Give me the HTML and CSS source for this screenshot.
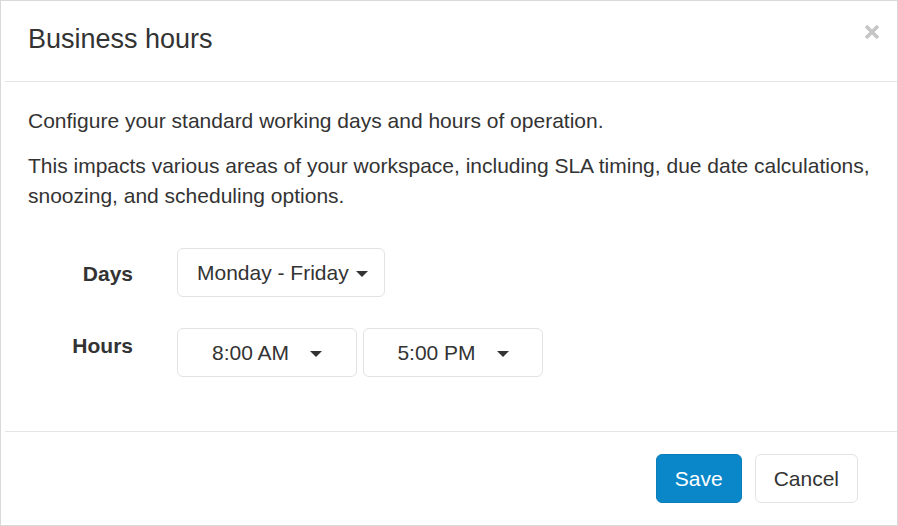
FILE: index.html
```html
<!DOCTYPE html>
<html lang="en">
<head>
    <meta charset="UTF-8">
    <meta name="viewport" content="width=device-width, initial-scale=1.0">
    <title>Business hours</title>
    <link rel="stylesheet" href="styles.css">
</head>
<body>
    <div class="modal">
        <div class="modal-inner">
            <div class="modal-header">
                <h4 class="modal-title">Business hours</h4>
                <button type="button" class="close" aria-label="Close">
                    <svg width="16" height="16" viewBox="0 0 16 16">
                        <path d="M2 2 L14 14 M14 2 L2 14" stroke="#c6c6c6" stroke-width="3.6" stroke-linecap="butt" fill="none"/>
                    </svg>
                </button>
            </div>
            <div class="modal-body">
                <p>Configure your standard working days and hours of operation.</p>
                <p>This impacts various areas of your workspace, including SLA timing, due date calculations, snoozing, and scheduling options.</p>
                <form class="hours-form">
                    <div class="form-row">
                        <label class="control-label days-label">Days</label>
                        <div class="controls">
                            <button type="button" class="dropdown days-dropdown">Monday - Friday<span class="caret"></span></button>
                        </div>
                    </div>
                    <div class="form-row">
                        <label class="control-label hours-label">Hours</label>
                        <div class="controls">
                            <button type="button" class="dropdown time-dropdown">8:00 AM<span class="caret wide"></span></button>
                            <button type="button" class="dropdown time-dropdown">5:00 PM<span class="caret wide"></span></button>
                        </div>
                    </div>
                </form>
            </div>
            <div class="modal-footer">
                <button type="button" class="btn btn-primary">Save</button>
                <button type="button" class="btn btn-default">Cancel</button>
            </div>
        </div>
    </div>
</body>
</html>
```

FILE: styles.css
```css
html, body {
    margin: 0;
    padding: 0;
}

body {
    font-family: "Liberation Sans", Arial, sans-serif;
    font-size: 21px;
    line-height: 30px;
    color: #333;
    background-color: #fff;
}

.modal {
    box-sizing: border-box;
    width: 898px;
    height: 526px;
    border: 1px solid #d9d9d9;
    background-color: #fff;
}

.modal-inner {
    margin-left: 4px;
}

.modal-header {
    display: flex;
    justify-content: space-between;
    align-items: flex-start;
    height: 61px;
    padding: 19px 17px 0 23px;
    border-bottom: 1px solid #e5e5e5;
}

.modal-title {
    margin: 0;
    font-size: 27px;
    font-weight: normal;
    line-height: 38px;
}

.close {
    background: none;
    border: none;
    padding: 0;
    margin-top: 4px;
    width: 16px;
    height: 16px;
    cursor: pointer;
}

.close svg {
    display: block;
}

.modal-body {
    height: 325px;
    padding: 24px 23px 0 23px;
}

.modal-body p {
    margin: 0 0 15px;
}

.hours-form {
    padding-top: 22px;
}

.form-row {
    display: flex;
    align-items: flex-start;
    gap: 44px;
    margin-bottom: 31px;
}

.control-label {
    width: 105px;
    text-align: right;
    font-weight: bold;
}

.days-label {
    padding-top: 11px;
}

.hours-label {
    padding-top: 3px;
}

.controls {
    display: flex;
    gap: 6px;
}

.dropdown {
    display: flex;
    align-items: center;
    box-sizing: border-box;
    height: 49px;
    background-color: #fff;
    border: 1px solid #e3e3e3;
    border-radius: 6px;
    font-family: inherit;
    font-size: 21px;
    color: #333;
    cursor: pointer;
}

.days-dropdown {
    padding: 0 16px 0 19px;
}

.time-dropdown {
    justify-content: center;
    width: 180px;
    padding: 0;
}

.caret {
    display: inline-block;
    width: 0;
    height: 0;
    margin-left: 7px;
    margin-top: 2px;
    border-top: 6px solid #333;
    border-left: 6px solid transparent;
    border-right: 6px solid transparent;
}

.caret.wide {
    margin-left: 21px;
}

.modal-footer {
    display: flex;
    justify-content: flex-end;
    gap: 13px;
    padding: 22px 39px 0 0;
    border-top: 1px solid #e5e5e5;
}

.btn {
    box-sizing: border-box;
    height: 49px;
    padding: 0 18px;
    border-radius: 6px;
    font-family: inherit;
    font-size: 21px;
    cursor: pointer;
}

.btn-primary {
    background-color: #0a87c9;
    border: 1px solid #0a7dba;
    color: #fff;
}

.btn-default {
    background-color: #fff;
    border: 1px solid #e3e3e3;
    color: #333;
}
```
